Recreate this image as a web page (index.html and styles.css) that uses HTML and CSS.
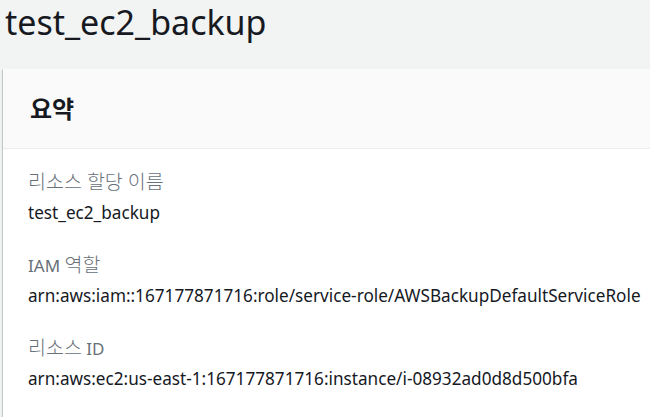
FILE: index.html
```html
<!DOCTYPE html>
<html lang="ko">
<head>
<meta charset="utf-8">
<link rel="stylesheet" href="styles.css">
</head>
<body>
<h1 class="title">test_ec2_backup</h1>
<section class="card">
  <header class="card-header"><h2>요약</h2></header>
  <div class="card-body">
    <div class="field">
      <div class="label"><span class="ko">리소스 할당 이름</span></div>
      <div class="value">test_ec2_backup</div>
    </div>
    <div class="field">
      <div class="label">IAM <span class="ko">역할</span></div>
      <div class="value">arn:aws:iam::167177871716:role/service-role/AWSBackupDefaultServiceRole</div>
    </div>
    <div class="field">
      <div class="label"><span class="ko">리소스</span> ID</div>
      <div class="value">arn:aws:ec2:us-east-1:167177871716:instance/i-08932ad0d8d500bfa</div>
    </div>
  </div>
</section>
</body>
</html>
```
FILE: styles.css
```css
html, body {
  margin: 0;
  padding: 0;
  background: #f2f3f3;
  font-family: "Noto Sans", "Noto Sans CJK KR", sans-serif;
  color: #16191f;
  overflow: hidden;
  height: 417px;
}
.title {
  margin: 0;
  padding: 0 0 0 5px;
  font-size: 34px;
  font-weight: 400;
  line-height: 44px;
  height: 69px;
  box-sizing: border-box;
}
.card {
  margin-left: 3px;
  background: #fff;
  box-shadow: 0 1px 1px 0 rgba(0,28,36,.3), 1px 1px 1px 0 rgba(0,28,36,.15), -1px 1px 1px 0 rgba(0,28,36,.15);
  height: 348px;
}
.card-header {
  background: #fafafa;
  border-bottom: 1px solid #eaeded;
  height: 80px;
  box-sizing: border-box;
  display: flex;
  align-items: center;
  padding-left: 27px;
}
.card-header h2 {
  margin: 0;
  font-size: 24px;
  font-weight: 700;
  line-height: 28px;
}
.card-body {
  padding: 22px 0 0 25px;
  display: flex;
  flex-direction: column;
  gap: 30px;
}
.field {
  display: flex;
  flex-direction: column;
  gap: 9px;
}
.label {
  font-size: 17px;
  line-height: 22px;
  height: 22px;
  color: #687078;
}
.ko {
  font-size: 19.5px;
  font-weight: 300;
  vertical-align: baseline;
  line-height: 22px;
}
.value {
  font-size: 17.17px;
  line-height: 22px;
  color: #16191f;
  white-space: nowrap;
}
```
